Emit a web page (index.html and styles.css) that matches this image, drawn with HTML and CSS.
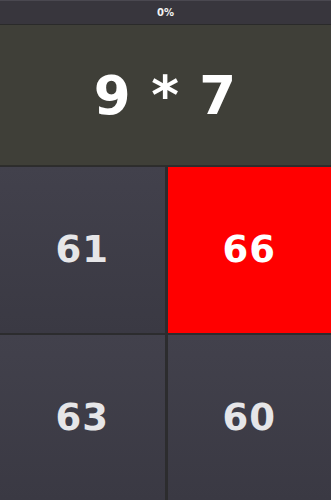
FILE: index.html
```html
<!DOCTYPE html>
<html lang="en">
<head>
	<meta charset="UTF-8">
	<title>Quiz</title>
	<link rel="stylesheet" href="styles.css">
</head>
<body>
	<main class="game">
		<div class="progress">0%</div>
		<h1 class="question">9 * 7</h1>
		<div class="answers">
			<button class="answer">61</button>
			<button class="answer wrong">66</button>
			<button class="answer">63</button>
			<button class="answer">60</button>
		</div>
	</main>
</body>
</html>
```

FILE: styles.css
```css
html,body{
	width: 100%;
	height: 100%;
	margin: 0;
	overflow: hidden;
	background-color: #2b2b2d;
}
.game{
	display: flex;
	flex-direction: column;
	height: 100%;
	font-family: "DejaVu Sans", sans-serif;
}
.progress{
	height: 23px;
	line-height: 24px;
	font-size: 10px;
	font-weight: bold;
	color: #f2f2f2;
	text-align: center;
	background-color: #38363d;
	border-top: 1px solid #4a4850;
	border-bottom: 1px solid #2a2a2a;
}
.question{
	display: flex;
	align-items: center;
	justify-content: center;
	height: 140px;
	margin: 0;
	font-size: 53px;
	font-weight: bold;
	color: #ffffff;
	letter-spacing: 1px;
	background-color: #3f3f38;
	border-bottom: 1px solid #2e2e2b;
}
.answers{
	flex: 1;
	display: grid;
	grid-template-columns: 1fr 1fr;
	grid-template-rows: 1fr 1fr;
	gap: 2px;
	padding-top: 1px;
	background-color: #2c2c2e;
}
.answer{
	margin: 0;
	padding: 0;
	border: none;
	font-family: "DejaVu Sans", sans-serif;
	font-size: 37px;
	font-weight: bold;
	letter-spacing: 1px;
	color: #e6e6e8;
	background: linear-gradient(#42414c, #3a3943);
}
.answer:nth-child(2n){
	margin-left: 1px;
}
.wrong{
	color: #ffffff;
	background: #ff0000;
}
```
